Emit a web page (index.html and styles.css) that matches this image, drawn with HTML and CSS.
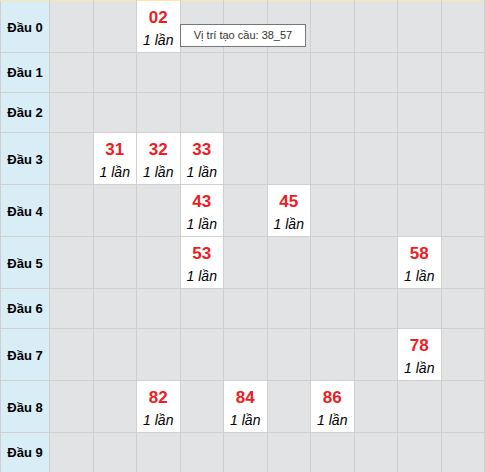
FILE: index.html
```html
<!DOCTYPE html>
<html lang="vi">
<head>
<meta charset="utf-8">
<link rel="stylesheet" href="styles.css">
</head>
<body>
<div class="wrap">
<table class="grid">
<colgroup><col class="c-lbl"><col span="10"></colgroup>
<tr class="full"><td class="lbl">Đầu 0</td><td></td><td></td><td class="hit"><div class="num">02</div><div class="cnt">1 lần</div></td><td></td><td></td><td></td><td></td><td></td><td></td><td></td></tr>
<tr><td class="lbl">Đầu 1</td><td></td><td></td><td></td><td></td><td></td><td></td><td></td><td></td><td></td><td></td></tr>
<tr><td class="lbl">Đầu 2</td><td></td><td></td><td></td><td></td><td></td><td></td><td></td><td></td><td></td><td></td></tr>
<tr class="full"><td class="lbl">Đầu 3</td><td></td><td class="hit"><div class="num">31</div><div class="cnt">1 lần</div></td><td class="hit"><div class="num">32</div><div class="cnt">1 lần</div></td><td class="hit"><div class="num">33</div><div class="cnt">1 lần</div></td><td></td><td></td><td></td><td></td><td></td><td></td></tr>
<tr class="full"><td class="lbl">Đầu 4</td><td></td><td></td><td></td><td class="hit"><div class="num">43</div><div class="cnt">1 lần</div></td><td></td><td class="hit"><div class="num">45</div><div class="cnt">1 lần</div></td><td></td><td></td><td></td><td></td></tr>
<tr class="full"><td class="lbl">Đầu 5</td><td></td><td></td><td></td><td class="hit"><div class="num">53</div><div class="cnt">1 lần</div></td><td></td><td></td><td></td><td></td><td class="hit"><div class="num">58</div><div class="cnt">1 lần</div></td><td></td></tr>
<tr><td class="lbl">Đầu 6</td><td></td><td></td><td></td><td></td><td></td><td></td><td></td><td></td><td></td><td></td></tr>
<tr class="full"><td class="lbl">Đầu 7</td><td></td><td></td><td></td><td></td><td></td><td></td><td></td><td></td><td class="hit"><div class="num">78</div><div class="cnt">1 lần</div></td><td></td></tr>
<tr class="full"><td class="lbl">Đầu 8</td><td></td><td></td><td class="hit"><div class="num">82</div><div class="cnt">1 lần</div></td><td></td><td class="hit"><div class="num">84</div><div class="cnt">1 lần</div></td><td></td><td class="hit"><div class="num">86</div><div class="cnt">1 lần</div></td><td></td><td></td><td></td></tr>
<tr><td class="lbl">Đầu 9</td><td></td><td></td><td></td><td></td><td></td><td></td><td></td><td></td><td></td><td></td></tr>
</table>
<div class="tip">Vị trí tạo cầu: 38_57</div>
</div>
</body>
</html>
```
FILE: styles.css
```css
html, body {
  margin: 0;
  padding: 0;
  background: #ffffff;
}
.wrap {
  position: relative;
  width: 485px;
}
.grid {
  width: 485px;
  table-layout: fixed;
  border-collapse: collapse;
  font-family: "Liberation Sans", Arial, sans-serif;
  border-top: 1px solid #fbe7a6;
}
.c-lbl {
  width: 49px;
}
.grid td {
  border: 1px solid #cfcfcf;
  background: #e2e3e5;
  padding: 5px 0 2px;
  text-align: center;
  vertical-align: middle;
}
.grid tr:first-child td {
  border-top-color: #fbe7a6;
}
.grid td.lbl {
  background: #d9edf7;
  font-weight: bold;
  font-size: 13px;
  color: #000;
  height: 35px;
  line-height: 16px;
  padding: 2px 0;
}
.grid tr.full td.lbl {
  padding: 5px 0 2px;
}
.grid td.hit {
  background: #ffffff;
}
.num {
  color: #ed1c24;
  font-weight: bold;
  font-size: 17px;
  line-height: 24px;
}
.cnt {
  color: #000;
  font-style: italic;
  font-size: 14px;
  line-height: 20px;
}
.tip {
  position: absolute;
  left: 180px;
  top: 24px;
  width: 124px;
  height: 21px;
  border: 1px solid #767676;
  background: #ffffff;
  color: #333;
  font-family: "Liberation Sans", Arial, sans-serif;
  font-size: 11px;
  line-height: 21px;
  text-align: center;
  box-sizing: content-box;
}
```
